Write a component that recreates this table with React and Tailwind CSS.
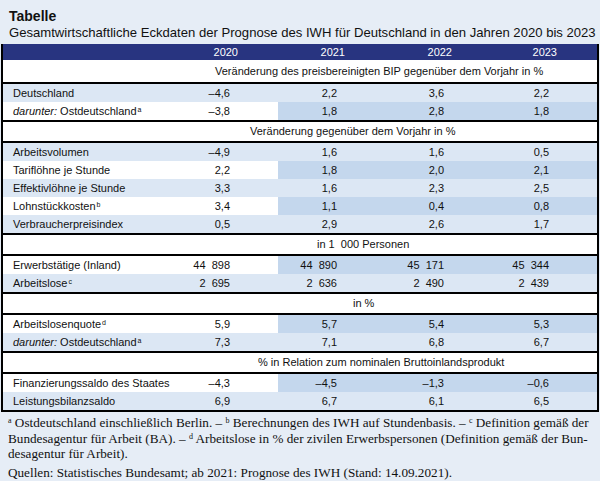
import React from 'react';

const rows = [
  { type: 'section', text: 'Veränderung des preisbereinigten BIP gegenüber dem Vorjahr in %', pad: 'pl-[212px]', first: true },
  { type: 'light', label: 'Deutschland', values: ['–4,6', '2,2', '3,6', '2,2'] },
  { type: 'plain', label: 'Ostdeutschland', italic: 'darunter', sup: 'a', values: ['–3,8', '1,8', '2,8', '1,8'] },
  { type: 'section', text: 'Veränderung gegenüber dem Vorjahr in %', pad: 'pl-[247px]' },
  { type: 'light', label: 'Arbeitsvolumen', values: ['–4,9', '1,6', '1,6', '0,5'] },
  { type: 'plain', label: 'Tariflöhne je Stunde', values: ['2,2', '1,8', '2,0', '2,1'] },
  { type: 'light', label: 'Effektivlöhne je Stunde', values: ['3,3', '1,6', '2,3', '2,5'] },
  { type: 'plain', label: 'Lohnstückkosten', sup: 'b', values: ['3,4', '1,1', '0,4', '0,8'] },
  { type: 'light', label: 'Verbraucherpreisindex', values: ['0,5', '2,9', '2,6', '1,7'] },
  { type: 'section', text: 'in 1  000 Personen', pad: 'pl-[314px]' },
  { type: 'plain', label: 'Erwerbstätige (Inland)', values: ['44  898', '44  890', '45  171', '45  344'] },
  { type: 'light', label: 'Arbeitslose', sup: 'c', values: ['2  695', '2  636', '2  490', '2  439'] },
  { type: 'section', text: 'in %', pad: 'pl-[350px]' },
  { type: 'plain', label: 'Arbeitslosenquote', sup: 'd', values: ['5,9', '5,7', '5,4', '5,3'] },
  { type: 'light', label: 'Ostdeutschland', italic: 'darunter', sup: 'a', values: ['7,3', '7,1', '6,8', '6,7'] },
  { type: 'section', text: '% in Relation zum nominalen Bruttoinlandsprodukt', pad: 'pl-[255px]' },
  { type: 'plain', label: 'Finanzierungssaldo des Staates', values: ['–4,3', '–4,5', '–1,3', '–0,6'] },
  { type: 'light', label: 'Leistungsbilanzsaldo', values: ['6,9', '6,7', '6,1', '6,5'] },
];

const cols = 'grid grid-cols-[167px_108px_107px_107px_105px]';

function DataRow({ row }) {
  const light = row.type === 'light';
  const base = light ? 'bg-[#dce7f4]' : 'bg-white';
  const forecast = light ? 'bg-[#dce7f4]' : 'bg-[#c4d7ed]';
  return (
    <div className={`${cols} h-[18px] items-center text-[11px] leading-[18px] text-[#111]`}>
      <div className={`${base} h-full pl-[10px] whitespace-nowrap`}>
        {row.italic && <span className="italic">{row.italic}: </span>}
        {row.label}
        {row.sup && <sup className="text-[7px] ml-[1px]">{row.sup}</sup>}
      </div>
      {row.values.map((v, i) => (
        <div
          key={i}
          className={`${i === 0 ? base : forecast} h-full pr-[48px] text-right whitespace-pre`}
        >
          {v}
        </div>
      ))}
    </div>
  );
}

function SectionRow({ row }) {
  return (
    <div
      className={`bg-white border-b-2 border-black ${row.first ? 'h-[24px]' : 'h-[23px] border-t-2'} flex items-center ${row.pad} text-[11px] text-[#111] whitespace-pre`}
    >
      {row.text}
    </div>
  );
}

export default function App() {
  return (
    <div className="w-[600px] h-[481px] bg-[#e6edf6] font-['Liberation_Sans',sans-serif] overflow-hidden">
      <div className="pt-[8px] pl-[9px] text-[#111]">
        <div className="text-[14px] font-bold leading-[16px]">Tabelle</div>
        <div className="text-[13.1px] leading-[18px] whitespace-nowrap">
          Gesamtwirtschaftliche Eckdaten der Prognose des IWH für Deutschland in den Jahren 2020 bis 2023
        </div>
      </div>
      <div className="ml-[1px] mt-[2px] w-[598px] border-x-2 border-b-2 border-black">
        <div className={`${cols} h-[16px] bg-[#283480] text-white text-[11px] leading-[16px]`}>
          <div></div>
          {['2020', '2021', '2022', '2023'].map((y) => (
            <div key={y} className="text-right pr-[40px]">{y}</div>
          ))}
        </div>
        {rows.map((row, i) =>
          row.type === 'section' ? <SectionRow key={i} row={row} /> : <DataRow key={i} row={row} />
        )}
      </div>
      <div className="pl-[8px] pr-[4px] pt-[3px] font-['Liberation_Serif',serif] text-[13.2px] leading-[15.5px] text-[#111] whitespace-nowrap">
        <p>
          <sup className="text-[8px]">a</sup> Ostdeutschland einschließlich Berlin. – <sup className="text-[8px]">b</sup> Berechnungen des IWH auf Stundenbasis. – <sup className="text-[8px]">c</sup> Definition gemäß der
          <br />
          Bundesagentur für Arbeit (BA). – <sup className="text-[8px]">d</sup> Arbeitslose in % der zivilen Erwerbspersonen (Definition gemäß der Bun-
          <br />
          desagentur für Arbeit).
        </p>
        <p className="mt-[3px]">Quellen: Statistisches Bundesamt; ab 2021: Prognose des IWH (Stand: 14.09.2021).</p>
      </div>
    </div>
  );
}
